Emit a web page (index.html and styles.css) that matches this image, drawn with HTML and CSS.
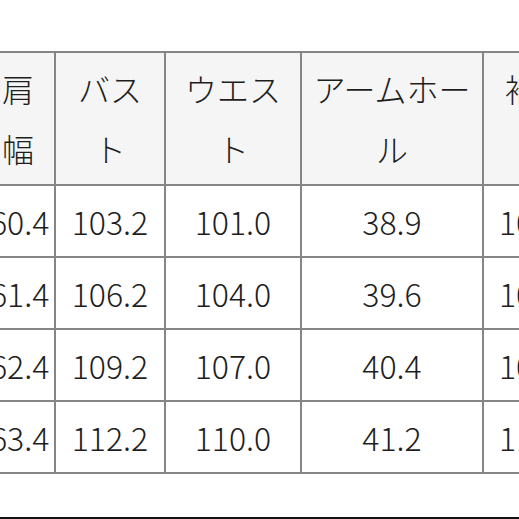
FILE: index.html
```html
<!DOCTYPE html>
<html lang="ja">
<head>
<meta charset="utf-8">
<title>サイズ表</title>
<link rel="stylesheet" href="styles.css">
</head>
<body>
<div class="frame">
  <table class="size-table">
    <colgroup>
      <col class="c1"><col class="c2"><col class="c3"><col class="c4"><col class="c5">
    </colgroup>
    <thead>
      <tr>
        <th>肩幅</th>
        <th>バスト</th>
        <th>ウエスト</th>
        <th>アームホール</th>
        <th class="last">袖丈</th>
      </tr>
    </thead>
    <tbody>
      <tr><td>60.4</td><td>103.2</td><td>101.0</td><td>38.9</td><td class="last">102.0</td></tr>
      <tr><td>61.4</td><td>106.2</td><td>104.0</td><td>39.6</td><td class="last">104.0</td></tr>
      <tr><td>62.4</td><td>109.2</td><td>107.0</td><td>40.4</td><td class="last">106.0</td></tr>
      <tr><td>63.4</td><td>112.2</td><td>110.0</td><td>41.2</td><td class="last">110.0</td></tr>
    </tbody>
  </table>
</div>
</body>
</html>
```

FILE: styles.css
```css
html, body {
  margin: 0;
  padding: 0;
  background: #ffffff;
}

.frame {
  width: 519px;
  height: 466px;
  overflow: hidden;
  border-bottom: 2px solid #111111;
  padding-top: 51px;
}

.size-table {
  margin-left: -20px;
  border-collapse: collapse;
  table-layout: fixed;
  width: 602px;
  font-family: "Noto Sans CJK JP", "Noto Sans", sans-serif;
  font-weight: 300;
  font-size: 32px;
  color: #1e1e1e;
}

.c1 { width: 74px; }
.c2 { width: 110px; }
.c3 { width: 136px; }
.c4 { width: 182px; }
.c5 { width: 100px; }

.size-table th,
.size-table td {
  border: 2px solid #858585;
  padding: 5px 8px;
  line-height: 60px;
  text-align: center;
  font-weight: 300;
  overflow: hidden;
}

.size-table th {
  background: #f5f5f5;
  padding-bottom: 6px;
}

.size-table td {
  background: #ffffff;
}

.size-table th.last {
  text-align: left;
  padding-left: 21px;
  padding-right: 0;
  white-space: nowrap;
  vertical-align: top;
}

.size-table td.last {
  text-align: left;
  padding-left: 15px;
  padding-right: 0;
  white-space: nowrap;
}
```
